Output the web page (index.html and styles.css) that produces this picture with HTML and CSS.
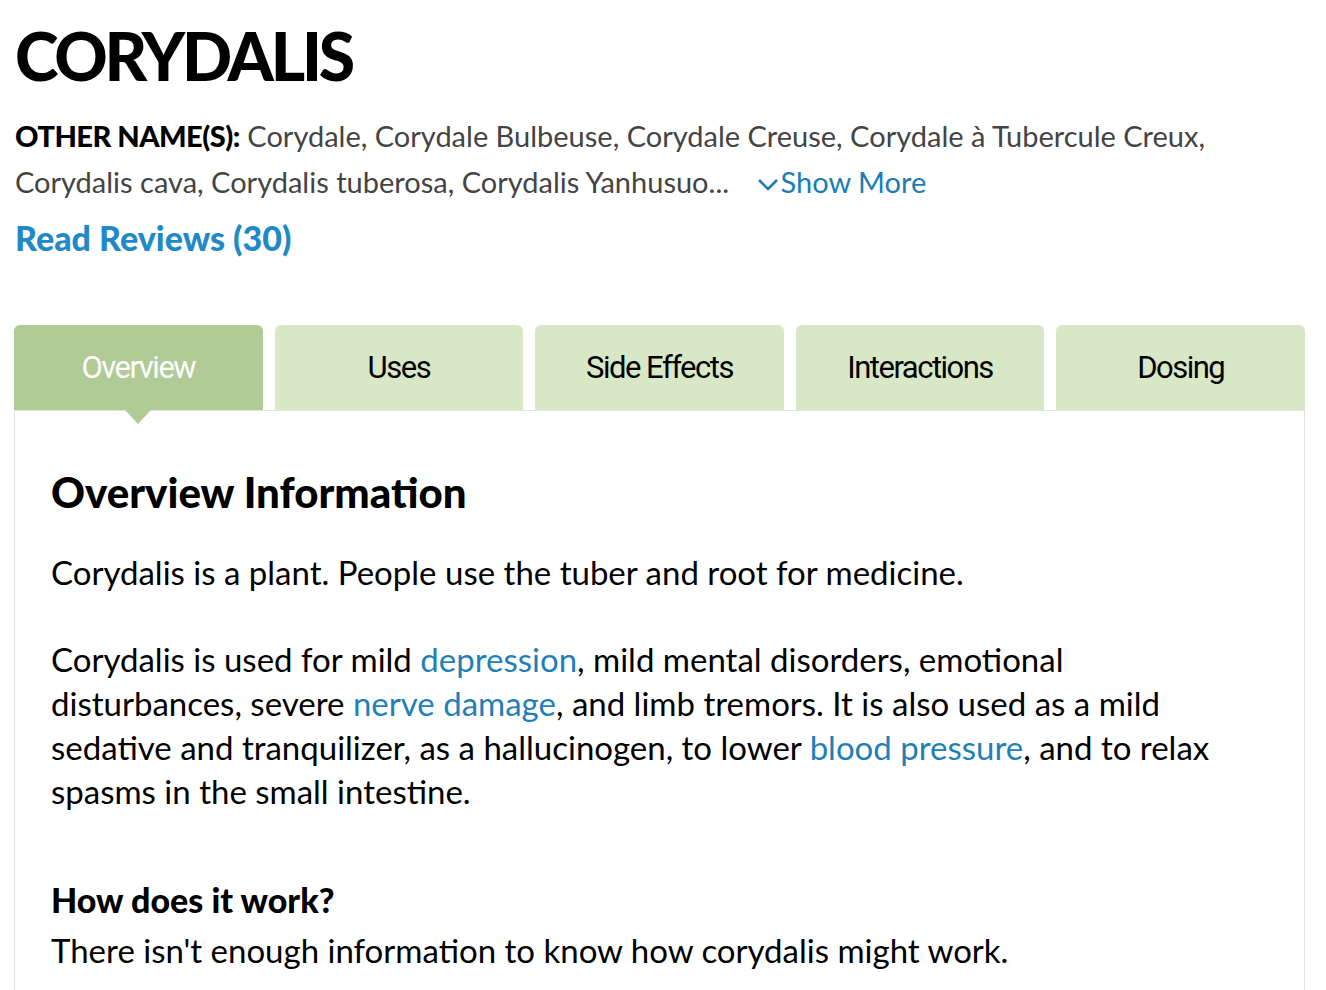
FILE: index.html
```html
<!DOCTYPE html>
<html lang="en">
<head>
    <meta charset="UTF-8">
    <meta name="viewport" content="width=device-width, initial-scale=1.0">
    <title>Corydalis</title>
    <link rel="stylesheet" href="styles.css">
</head>
<body>
    <div class="page">
        <h1 class="title">CORYDALIS</h1>
        <p class="other-names">
            <strong>OTHER NAME(S):</strong> Corydale, Corydale Bulbeuse, Corydale Creuse, Corydale à Tubercule Creux, Corydalis cava, Corydalis tuberosa, Corydalis Yanhusuo...
            <a class="show-more" href="#">
                <svg width="22" height="18" viewBox="0 0 22 18"><path d="M2 5 L11 14 L20 5" fill="none" stroke="currentColor" stroke-width="2.6"/></svg>Show More
            </a>
        </p>
        <a class="reviews" href="#">Read Reviews (30)</a>

        <nav class="tabs">
            <a class="tab active" href="#">Overview</a>
            <a class="tab" href="#">Uses</a>
            <a class="tab" href="#">Side Effects</a>
            <a class="tab" href="#">Interactions</a>
            <a class="tab" href="#">Dosing</a>
        </nav>

        <section class="panel">
            <h2>Overview Information</h2>
            <p>Corydalis is a plant. People use the tuber and root for medicine.</p>
            <p>Corydalis is used for mild <a href="#">depression</a>, mild mental disorders, emotional disturbances, severe <a href="#">nerve damage</a>, and limb tremors. It is also used as a mild sedative and tranquilizer, as a hallucinogen, to lower <a href="#">blood pressure</a>, and to relax spasms in the small intestine.</p>
            <h3>How does it work?</h3>
            <p class="tight">There isn't enough information to know how corydalis might work.</p>
        </section>
    </div>
</body>
</html>
```

FILE: styles.css
```css
body {
    margin: 0;
    padding: 0;
    background: #ffffff;
    color: #000000;
    font-family: 'Lato', sans-serif;
}

a {
    text-decoration: none;
}

.page {
    padding: 0 21px 0 14px;
}

.title {
    margin: 22px 0 0 1px;
    font-size: 66px;
    line-height: 68px;
    font-weight: 900;
    letter-spacing: -3.2px;
}

.other-names {
    margin: 23px 0 0 1px;
    font-size: 29px;
    line-height: 46px;
    color: #444444;
}

.other-names strong {
    color: #000000;
    font-weight: 900;
    letter-spacing: -0.5px;
}

.show-more {
    margin-left: 20px;
    color: #1a7db5;
    white-space: nowrap;
}

.show-more svg {
    margin-right: 2px;
}

.reviews {
    display: block;
    margin: 10px 0 0 1px;
    font-size: 34px;
    line-height: 46px;
    font-weight: 900;
    color: #2189c7;
}

.tabs {
    display: flex;
    gap: 12px;
    margin-top: 64px;
}

.tab {
    position: relative;
    flex: 1;
    height: 85px;
    display: flex;
    align-items: center;
    justify-content: center;
    border-radius: 6px 6px 0 0;
    background: #d8e8c6;
    color: #000000;
    font-family: 'Roboto', sans-serif;
    font-size: 31px;
    letter-spacing: -1.5px;
}

.tab.active {
    background: #b1cb96;
    color: #ffffff;
}

.tab.active::after {
    content: "";
    position: absolute;
    left: 50%;
    bottom: -14px;
    margin-left: -13px;
    border-left: 13px solid transparent;
    border-right: 13px solid transparent;
    border-top: 14px solid #b1cb96;
}

.panel {
    border: 1px solid #e2e2e2;
    padding: 56px 70px 40px 36px;
    min-height: 700px;
}

.panel h2 {
    margin: 0;
    font-size: 42px;
    line-height: 50px;
    font-weight: 900;
}

.panel p {
    margin: 33px 0 0;
    font-size: 33px;
    line-height: 44px;
}

.panel p + p {
    margin-top: 43px;
}

.panel a {
    color: #1f80b8;
}

.panel h3 {
    margin: 65px 0 0;
    font-size: 34px;
    line-height: 44px;
    font-weight: 900;
}

.panel p.tight {
    margin-top: 6px;
}
```
